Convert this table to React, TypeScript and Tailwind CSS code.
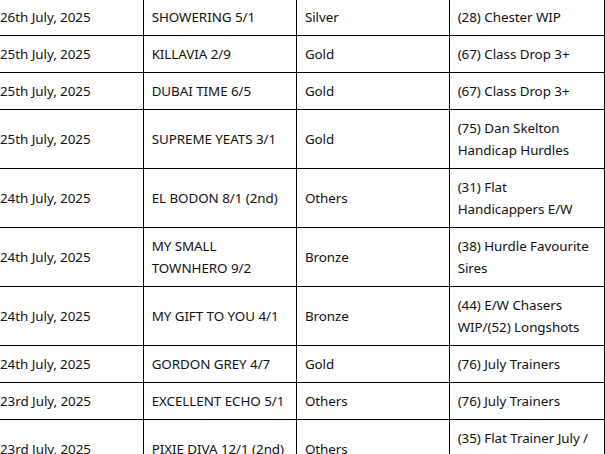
import React from "react";

interface Row {
  date: string;
  horse: string;
  level: string;
  system: string;
}

const rows: Row[] = [
  { date: "26th July, 2025", horse: "SHOWERING 5/1", level: "Silver", system: "(28) Chester WIP" },
  { date: "25th July, 2025", horse: "KILLAVIA 2/9", level: "Gold", system: "(67) Class Drop 3+" },
  { date: "25th July, 2025", horse: "DUBAI TIME 6/5", level: "Gold", system: "(67) Class Drop 3+" },
  { date: "25th July, 2025", horse: "SUPREME YEATS 3/1", level: "Gold", system: "(75) Dan Skelton Handicap Hurdles" },
  { date: "24th July, 2025", horse: "EL BODON 8/1 (2nd)", level: "Others", system: "(31) Flat Handicappers E/W" },
  { date: "24th July, 2025", horse: "MY SMALL TOWNHERO 9/2", level: "Bronze", system: "(38) Hurdle Favourite Sires" },
  { date: "24th July, 2025", horse: "MY GIFT TO YOU 4/1", level: "Bronze", system: "(44) E/W Chasers WIP/(52) Longshots" },
  { date: "24th July, 2025", horse: "GORDON GREY 4/7", level: "Gold", system: "(76) July Trainers" },
  { date: "23rd July, 2025", horse: "EXCELLENT ECHO 5/1", level: "Others", system: "(76) July Trainers" },
  { date: "23rd July, 2025", horse: "PIXIE DIVA 12/1 (2nd)", level: "Others", system: "(35) Flat Trainer July / Handicap Sires" },
];

export default function App() {
  return (
    <div className="w-[605px] h-[454px] overflow-hidden bg-white">
      <div className="-mt-[2px] -ml-[9px]">
        <table
          className="table-fixed border-collapse text-[13.4px] leading-[22px] tracking-[-0.05px] text-[#111]"
          style={{ fontFamily: '"Noto Sans", "Open Sans", sans-serif' }}
        >
          <colgroup>
            <col className="w-[153px]" />
            <col className="w-[154px]" />
            <col className="w-[154px]" />
            <col className="w-[156px]" />
          </colgroup>
          <tbody>
            {rows.map((r, i) => (
              <tr key={i}>
                <td className="border border-black px-2 py-[7px] align-middle">{r.date}</td>
                <td className="border border-black px-2 py-[7px] align-middle">{r.horse}</td>
                <td className="border border-black px-2 py-[7px] align-middle">{r.level}</td>
                <td className="border border-black px-2 py-[7px] align-middle">{r.system}</td>
              </tr>
            ))}
          </tbody>
        </table>
      </div>
    </div>
  );
}
